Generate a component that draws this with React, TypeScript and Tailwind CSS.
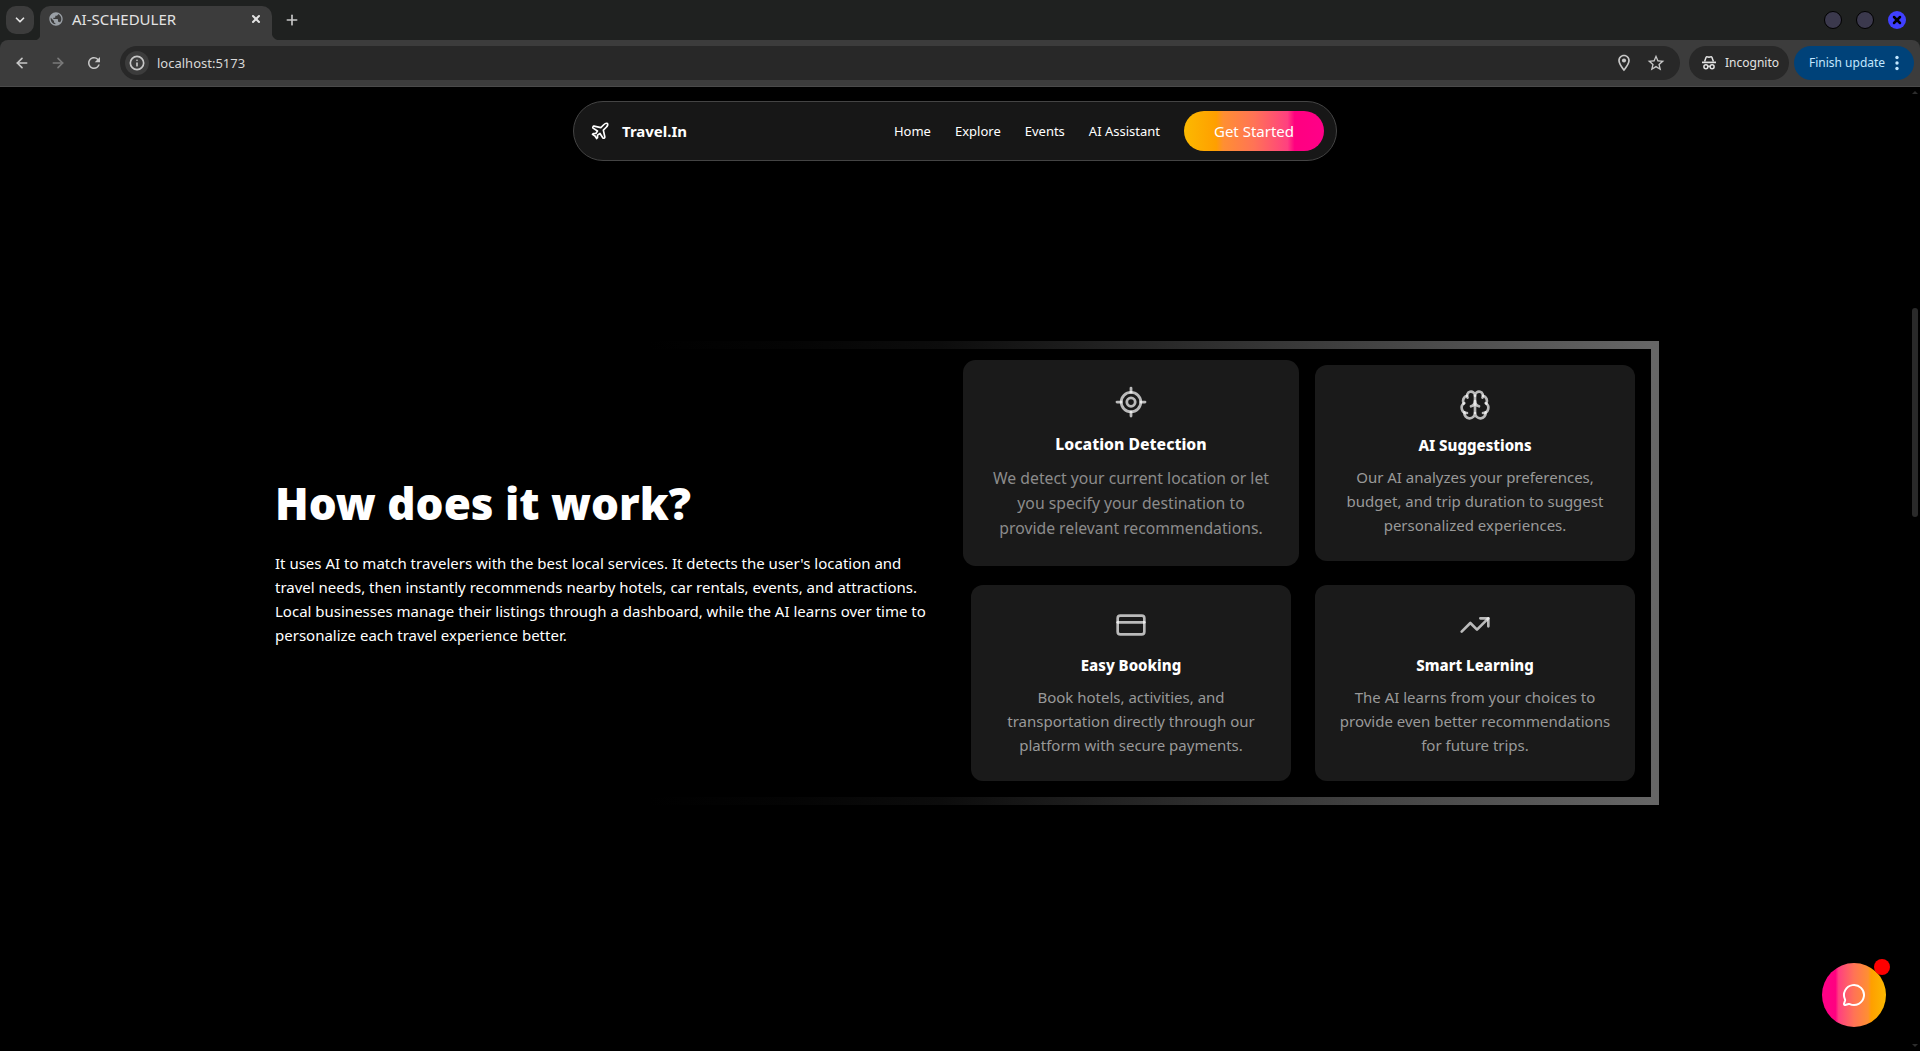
import { useState } from 'react';
import type { LucideIcon } from 'lucide-react';
import {
  ArrowLeft,
  ArrowRight,
  Brain,
  ChevronDown,
  CreditCard,
  Info,
  LocateFixed,
  MessageCircle,
  Plane,
  Plus,
  TrendingUp,
  X,
} from 'lucide-react';
import { MdOutlineLocationOn, MdOutlineStarBorder, MdPublic, MdRefresh } from 'react-icons/md';

interface Feature {
  title: string;
  text: string;
  icon: LucideIcon;
}

const features: Feature[] = [
  {
    title: 'Location Detection',
    text: 'We detect your current location or let you specify your destination to provide relevant recommendations.',
    icon: LocateFixed,
  },
  {
    title: 'AI Suggestions',
    text: 'Our AI analyzes your preferences, budget, and trip duration to suggest personalized experiences.',
    icon: Brain,
  },
  {
    title: 'Easy Booking',
    text: 'Book hotels, activities, and transportation directly through our platform with secure payments.',
    icon: CreditCard,
  },
  {
    title: 'Smart Learning',
    text: 'The AI learns from your choices to provide even better recommendations for future trips.',
    icon: TrendingUp,
  },
];

const links = ['Home', 'Explore', 'Events', 'AI Assistant'];

function IncognitoIcon() {
  return (
    <svg viewBox="0 0 16 16" className="size-4 shrink-0" fill="none" stroke="currentColor" aria-hidden="true">
      <path d="M3.6 6.6 5 2.4c.2-.6.6-.8 1.2-.6l1.8.5 1.8-.5c.6-.2 1 0 1.2.6l1.4 4.2" strokeWidth="1.5" />
      <path d="M1 7.4h14" strokeWidth="1.7" />
      <circle cx="4.9" cy="11.8" r="2" strokeWidth="1.5" />
      <circle cx="11.1" cy="11.8" r="2" strokeWidth="1.5" />
      <path d="M6.9 11.5c.7-.4 1.5-.4 2.2 0" strokeWidth="1.3" />
    </svg>
  );
}

function TabStrip() {
  return (
    <div className="flex h-10 items-center bg-[#1f2120]">
      <button
        aria-label="Search tabs"
        className="ml-1.5 flex size-7 items-center justify-center rounded-[10px] bg-[#3c3c3c] text-[#e3e3e3]"
      >
        <ChevronDown className="size-3.5" strokeWidth={3} />
      </button>
      <div className="flex h-full items-end">
        <div className="size-1.5 bg-[radial-gradient(circle_at_0_0,#1f2120_6px,#3c3c3c_7px)]" />
        <div className="flex h-[34px] w-[232px] items-center rounded-t-[10px] bg-[#3c3c3c] pr-2.5 pb-2 pl-2">
          <MdPublic className="size-4 text-[#9aa0a6]" />
          <span className="ml-2 flex-1 text-[15px] leading-5 text-[#e3e3e3]">AI-SCHEDULER</span>
          <button aria-label="Close tab" className="text-[#e3e3e3]">
            <X className="size-3" strokeWidth={4} />
          </button>
        </div>
        <div className="size-2 bg-[radial-gradient(circle_at_100%_0,#1f2120_8px,#3c3c3c_9px)]" />
      </div>
      <button aria-label="New tab" className="ml-1 text-[#c7c7c7]">
        <Plus className="size-4" strokeWidth={2.5} />
      </button>
      <div className="mr-3.5 ml-auto flex gap-3.5">
        <button aria-label="Minimize" className="size-[18px] rounded-full border border-black bg-[#3b394d]" />
        <button aria-label="Maximize" className="size-[18px] rounded-full border border-black bg-[#3b394d]" />
        <button
          aria-label="Close window"
          className="flex size-[18px] items-center justify-center rounded-full bg-[#4040ff] text-black"
        >
          <X className="size-3" strokeWidth={5} />
        </button>
      </div>
    </div>
  );
}

function Toolbar() {
  const [url, setUrl] = useState('localhost:5173');

  return (
    <div className="bg-[#1f2120]">
      <div className="flex h-[47px] items-center rounded-t-lg border-b border-[#4a4a4a] bg-[#3c3c3c] pr-1.5 pl-3 text-[#c7c7c7]">
        <button aria-label="Back" className="flex size-5 items-center justify-center">
          <ArrowLeft className="size-4" strokeWidth={2.5} />
        </button>
        <button aria-label="Forward" className="ml-4 flex size-5 items-center justify-center text-[#7a7a7a]">
          <ArrowRight className="size-4" strokeWidth={2.5} />
        </button>
        <button aria-label="Reload" className="ml-4 flex size-5 items-center justify-center">
          <MdRefresh className="size-[18px]" />
        </button>
        <div className="ml-4 flex h-[34px] flex-1 items-center rounded-full bg-[#282828] pr-3.5 pl-[5px]">
          <button
            aria-label="Site information"
            className="flex size-6 items-center justify-center rounded-full bg-[#3c3c3c]"
          >
            <Info className="size-4" strokeWidth={2.5} />
          </button>
          <input
            aria-label="Address"
            value={url}
            onChange={(e) => setUrl(e.target.value)}
            className="ml-2 min-w-0 flex-1 bg-transparent text-[13px] text-[#d8d8d8] outline-none"
          />
          <button aria-label="Location allowed">
            <MdOutlineLocationOn className="size-5" />
          </button>
          <button aria-label="Bookmark this tab" className="ml-3">
            <MdOutlineStarBorder className="size-5" />
          </button>
        </div>
        <button className="ml-[9px] flex h-[34px] w-[100px] items-center gap-2 rounded-full bg-[#282828] pl-3 text-xs text-[#e3e3e3]">
          <IncognitoIcon />
          Incognito
        </button>
        <button className="ml-[5px] flex h-[34px] w-[120px] items-center rounded-full bg-[#004279] pl-[15px] text-xs whitespace-nowrap text-[#c2e7ff]">
          Finish update
          <svg viewBox="0 0 4 16" className="ml-2.5 h-4 w-1 shrink-0" fill="currentColor" aria-hidden="true">
            <circle cx="2" cy="2.5" r="1.7" />
            <circle cx="2" cy="8" r="1.7" />
            <circle cx="2" cy="13.5" r="1.7" />
          </svg>
        </button>
      </div>
    </div>
  );
}

function Navbar() {
  return (
    <nav className="absolute inset-x-0 top-3.5 mx-auto flex h-[60px] w-[764px] items-center rounded-full border border-[#444] bg-[#171717] pr-3 pl-4">
      <a href="#home" className="flex items-center gap-3 font-bold">
        <Plane className="size-5" />
        Travel.In
      </a>
      <div className="ml-auto flex items-center gap-6 text-[13px]">
        {links.map((link) => (
          <a key={link} href="#explore">
            {link}
          </a>
        ))}
        <button className="h-10 w-[140px] rounded-full bg-[linear-gradient(90deg,#fcb900,#ff9f00_23%,#ff8f32_28%,#ff7356_50%,#ff4080_74%,#ff0080_79%,#ff0088)] text-[15px]">
          Get Started
        </button>
      </div>
    </nav>
  );
}

function FeatureCard({ feature, active }: { feature: Feature; active: boolean }) {
  const Icon = feature.icon;

  return (
    <div
      className={`flex flex-col items-center rounded-xl bg-[#1a1a1a] p-6 text-center ${active ? 'scale-105' : ''}`}
    >
      <Icon className="mb-3 size-8 text-white/70" />
      <h3 className="mb-2 font-extrabold">{feature.title}</h3>
      <p className={active ? 'text-[#8c8c8c]' : 'text-[#999]'}>{feature.text}</p>
    </div>
  );
}

function HowItWorks() {
  return (
    <section className="grid w-full max-w-[1408px] grid-cols-2 items-center gap-8 border-8 p-4 [border-image:linear-gradient(to_left,#666,#0c0c0c_51%,#040404_62%,transparent_72%)_1]">
      <div className="pb-5">
        <h2 className="mb-6 text-[44px] leading-12 font-black">How does it work?</h2>
        <p>
          It uses AI to match travelers with the best local services. It detects the user's location and travel needs,
          then instantly recommends nearby hotels, car rentals, events, and attractions. Local businesses manage their
          listings through a dashboard, while the AI learns over time to personalize each travel experience better.
        </p>
      </div>
      <div className="grid grid-cols-2 gap-6">
        {features.map((feature, i) => (
          <FeatureCard key={feature.title} feature={feature} active={i === 0} />
        ))}
      </div>
    </section>
  );
}

function ChatButton() {
  return (
    <button
      aria-label="Open chat"
      className="absolute right-6 bottom-6 flex size-16 items-center justify-center rounded-full bg-[linear-gradient(270deg,#fcb900,#ff9f00_23%,#ff8f32_28%,#ff7356_50%,#ff4080_74%,#ff0080_79%,#ff0088)]"
    >
      <MessageCircle className="size-6" />
      <span className="absolute -top-1 -right-1 size-4 rounded-full bg-[#f00]" />
    </button>
  );
}

function Scrollbar() {
  return (
    <div className="flex w-2.5 flex-col items-center bg-black pt-1 pb-1" aria-hidden="true">
      <svg viewBox="0 0 6 3" className="h-[3px] w-1.5 fill-[#2c2c2c]">
        <path d="M0 3 3 0l3 3z" />
      </svg>
      <div className="w-1.5 grow-[214]" />
      <div className="w-1.5 grow-[209] rounded-full bg-[#2a2a2a]" />
      <div className="w-1.5 grow-[527]" />
      <svg viewBox="0 0 6 3" className="h-[3px] w-1.5 fill-[#2c2c2c]">
        <path d="M0 0h6L3 3z" />
      </svg>
    </div>
  );
}

export default function App() {
  return (
    <div className="flex min-h-screen flex-col bg-black font-['Noto_Sans',sans-serif] text-[15px] leading-6 text-white">
      <header>
        <TabStrip />
        <Toolbar />
      </header>
      <div className="flex flex-1">
        <main className="relative flex flex-1 items-center justify-center pt-2">
          <Navbar />
          <HowItWorks />
          <ChatButton />
        </main>
        <Scrollbar />
      </div>
    </div>
  );
}
